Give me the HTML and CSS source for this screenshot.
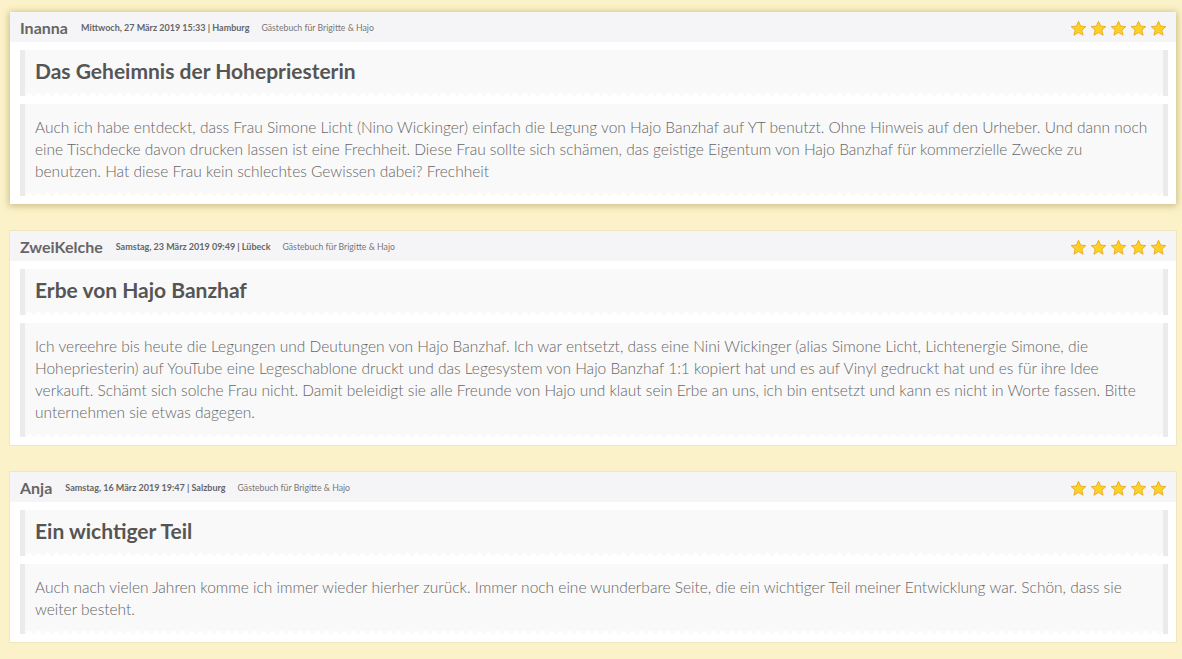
FILE: index.html
```html
<!DOCTYPE html>
<html lang="de">
<head>
<meta charset="utf-8">
<title>Gästebuch</title>
<link rel="stylesheet" href="styles.css">
</head>
<body>
<svg width="0" height="0" class="defs">
  <defs>
    <symbol id="star" viewBox="0 0 24 24">
      <polygon points="12,1.8 15,8.6 22.4,9.3 16.8,14.2 18.5,21.5 12,17.7 5.5,21.5 7.2,14.2 1.6,9.3 9,8.6" fill="#fdd225" stroke="#e9a51c" stroke-width="1.2" stroke-linejoin="round"/>
    </symbol>
  </defs>
</svg>
<main class="list">
  <article class="entry entry-active">
    <header class="entry-head">
      <span class="name">Inanna</span>
      <span class="date">Mittwoch, 27 März 2019 15:33 | Hamburg</span>
      <span class="book">Gästebuch für Brigitte &amp; Hajo</span>
      <span class="stars">
        <svg class="star"><use href="#star"/></svg><svg class="star"><use href="#star"/></svg><svg class="star"><use href="#star"/></svg><svg class="star"><use href="#star"/></svg><svg class="star"><use href="#star"/></svg>
      </span>
    </header>
    <h2 class="quote title">Das Geheimnis der Hohepriesterin</h2>
    <p class="quote text">Auch ich habe entdeckt, dass Frau Simone Licht (Nino Wickinger) einfach die Legung von Hajo Banzhaf auf YT benutzt. Ohne Hinweis auf den Urheber. Und dann noch eine Tischdecke davon drucken lassen ist eine Frechheit. Diese Frau sollte sich schämen, das geistige Eigentum von Hajo Banzhaf für kommerzielle Zwecke zu benutzen. Hat diese Frau kein schlechtes Gewissen dabei? Frechheit</p>
  </article>

  <article class="entry">
    <header class="entry-head">
      <span class="name">ZweiKelche</span>
      <span class="date">Samstag, 23 März 2019 09:49 | Lübeck</span>
      <span class="book">Gästebuch für Brigitte &amp; Hajo</span>
      <span class="stars">
        <svg class="star"><use href="#star"/></svg><svg class="star"><use href="#star"/></svg><svg class="star"><use href="#star"/></svg><svg class="star"><use href="#star"/></svg><svg class="star"><use href="#star"/></svg>
      </span>
    </header>
    <h2 class="quote title">Erbe von Hajo Banzhaf</h2>
    <p class="quote text">Ich vereehre bis heute die Legungen und Deutungen von Hajo Banzhaf. Ich war entsetzt, dass eine Nini Wickinger (alias Simone Licht, Lichtenergie Simone, die Hohepriesterin) auf YouTube eine Legeschablone druckt und das Legesystem von Hajo Banzhaf 1:1 kopiert hat und es auf Vinyl gedruckt hat und es für ihre Idee verkauft. Schämt sich solche Frau nicht. Damit beleidigt sie alle Freunde von Hajo und klaut sein Erbe an uns, ich bin entsetzt und kann es nicht in Worte fassen. Bitte unternehmen sie etwas dagegen.</p>
  </article>

  <article class="entry">
    <header class="entry-head">
      <span class="name">Anja</span>
      <span class="date">Samstag, 16 März 2019 19:47 | Salzburg</span>
      <span class="book">Gästebuch für Brigitte &amp; Hajo</span>
      <span class="stars">
        <svg class="star"><use href="#star"/></svg><svg class="star"><use href="#star"/></svg><svg class="star"><use href="#star"/></svg><svg class="star"><use href="#star"/></svg><svg class="star"><use href="#star"/></svg>
      </span>
    </header>
    <h2 class="quote title">Ein wichtiger Teil</h2>
    <p class="quote text">Auch nach vielen Jahren komme ich immer wieder hierher zurück. Immer noch eine wunderbare Seite, die ein wichtiger Teil meiner Entwicklung war. Schön, dass sie weiter besteht.</p>
  </article>
</main>
</body>
</html>
```

FILE: styles.css
```css
html, body {
  margin: 0;
  padding: 0;
  background: #fcf2c9;
  font-family: Lato, "Open Sans", sans-serif;
}

.defs {
  position: absolute;
  width: 0;
  height: 0;
}

.list {
  display: flex;
  flex-direction: column;
  gap: 27px;
  padding: 12px 6px 20px 10px;
}

.entry {
  background: #ffffff;
  padding-bottom: 8px;
  display: flex;
  flex-direction: column;
  gap: 8px;
  box-shadow: 0 0 0 1px rgba(230, 220, 180, 0.5);
}

.entry-active {
  box-shadow: 0 1px 7px 1px rgba(140, 120, 50, 0.45);
}

.entry-head {
  height: 30px;
  background: #f5f5f7;
  display: flex;
  align-items: center;
  padding: 0 10px;
}

.name {
  font-size: 16px;
  font-weight: 700;
  color: #666666;
  margin-right: 13px;
  padding-top: 1px;
}

.date {
  font-size: 9px;
  font-weight: 700;
  color: #666666;
  margin-right: 12px;
}

.book {
  font-size: 8.7px;
  color: #777777;
}

.stars {
  margin-left: auto;
  display: flex;
  gap: 3px;
  margin-right: -1px;
  padding-top: 3px;
}

.star {
  width: 17px;
  height: 17px;
  display: block;
}

.quote {
  margin: 0 8px 0 10px;
  background: #f9f9f9;
  border-left: 5px solid #ebebeb;
  border-right: 5px solid #ebebeb;
  position: relative;
}

.quote::after {
  content: "";
  position: absolute;
  left: 0;
  right: 0;
  bottom: 0;
  height: 5px;
  background: radial-gradient(circle at 50% 100%, #ffffff 2.5px, rgba(255, 255, 255, 0) 3.5px);
  background-size: 9px 5px;
  background-repeat: repeat-x;
}

.title {
  font-size: 21px;
  font-weight: 700;
  color: #555555;
  line-height: 26px;
  padding: 8px 10px 12px 10px;
}

.text {
  font-size: 15.5px;
  font-weight: 300;
  color: #666666;
  line-height: 22px;
  padding: 12px 14px 14px 10px;
}
```
